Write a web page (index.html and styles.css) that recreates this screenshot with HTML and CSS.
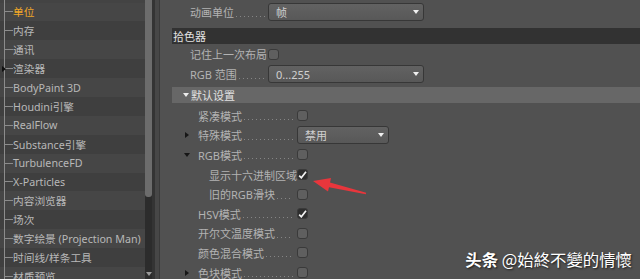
FILE: index.html
```html
<!DOCTYPE html>
<html lang="zh-CN">
<head>
    <meta charset="UTF-8">
    <title>设置 - 单位</title>
    <link rel="stylesheet" href="styles.css">
</head>
<body>

    <div class="app">
        <ul class="tree">
            <li class="node sel"><span class="tick"></span>单位</li>
            <li class="node"><span class="tick"></span>内存</li>
            <li class="node"><span class="tick"></span>通讯</li>
            <li class="node closed"><span class="tick"></span>渲染器</li>
            <li class="node"><span class="tick"></span>BodyPaint 3D</li>
            <li class="node"><span class="tick"></span>Houdini引擎</li>
            <li class="node"><span class="tick"></span>RealFlow</li>
            <li class="node"><span class="tick"></span>Substance引擎</li>
            <li class="node"><span class="tick"></span>TurbulenceFD</li>
            <li class="node"><span class="tick"></span>X-Particles</li>
            <li class="node"><span class="tick"></span>内容浏览器</li>
            <li class="node"><span class="tick"></span>场次</li>
            <li class="node"><span class="tick"></span>数字绘景 (Projection Man)</li>
            <li class="node"><span class="tick"></span>时间线/样条工具</li>
            <li class="node"><span class="tick"></span>材质预览</li>
        </ul>

        <div class="scroll">
            <div class="thumb"></div>
            <div class="track"><span class="down"></span></div>
        </div>
        <div class="split"></div>

        <div class="prefs">
            <div class="row">
                <span class="lab"><span>动画单位</span><span class="dots"></span></span>
                <div class="select wide">帧</div>
            </div>

            <div class="head dark">拾色器</div>
            <div class="row">
                <span class="lab"><span>记住上一次布局</span><span class="dots"></span></span>
                <span class="check"></span>
            </div>
            <div class="row">
                <span class="lab"><span>RGB 范围</span><span class="dots"></span></span>
                <div class="select wide">0...255</div>
            </div>

            <div class="head light"><span class="caret"></span>默认设置</div>
            <div class="group">
                <div class="row">
                    <span class="lab"><span class="tg"></span><span>紧凑模式</span><span class="dots"></span></span>
                    <span class="check"></span>
                </div>
                <div class="row">
                    <span class="lab"><span class="tg right"></span><span>特殊模式</span><span class="dots"></span></span>
                    <div class="select small">禁用</div>
                </div>
                <div class="row">
                    <span class="lab"><span class="tg open"></span><span>RGB模式</span><span class="dots"></span></span>
                    <span class="check"></span>
                </div>
                <div class="row sub">
                    <span class="lab"><span class="tg"></span><span>显示十六进制区域</span><span class="dots"></span></span>
                    <span class="check on"><svg width="9" height="8" viewBox="0 0 9 8"><path d="M1.2 4.6 L3.3 6.8 L8 0.8" fill="none" stroke="#f2f2f2" stroke-width="1.7"/></svg></span>
                </div>
                <div class="row sub">
                    <span class="lab"><span class="tg"></span><span>旧的RGB滑块</span><span class="dots"></span></span>
                    <span class="check"></span>
                </div>
                <div class="row">
                    <span class="lab"><span class="tg"></span><span>HSV模式</span><span class="dots"></span></span>
                    <span class="check on"><svg width="9" height="8" viewBox="0 0 9 8"><path d="M1.2 4.6 L3.3 6.8 L8 0.8" fill="none" stroke="#f2f2f2" stroke-width="1.7"/></svg></span>
                </div>
                <div class="row">
                    <span class="lab"><span class="tg"></span><span>开尔文温度模式</span><span class="dots"></span></span>
                    <span class="check"></span>
                </div>
                <div class="row">
                    <span class="lab"><span class="tg"></span><span>颜色混合模式</span><span class="dots"></span></span>
                    <span class="check"></span>
                </div>
                <div class="row">
                    <span class="lab"><span class="tg right"></span><span>色块模式</span><span class="dots"></span></span>
                    <span class="check"></span>
                </div>
            </div>
        </div>
    </div>

    <!-- annotation drawn over the screenshot -->
    <svg class="arrow" width="640" height="279" viewBox="0 0 640 279">
        <polygon points="313,181 331,178 330,182.4 366.2,192.7 365.8,194.3 329,187.2 328,191.6" fill="#e8363c"/>
    </svg>
    <div class="mark"><b>头条</b> @始終不變的情懷</div>

</body>
</html>
```

FILE: styles.css
```css
* {
    margin: 0;
    padding: 0;
    box-sizing: border-box;
}

body {
    font-family: "Noto Sans", "Noto Sans CJK SC", sans-serif;
    font-size: 11px;
    background-color: #3b3b3b;
    width: 640px;
    height: 279px;
    overflow: hidden;
    position: relative;
}

.app {
    display: flex;
    height: 279px;
}

/* left tree */
.tree {
    list-style: none;
    width: 145px;
    padding-top: 2.5px;
    font-size: 10.7px;
    background: #434343 linear-gradient(#8c8c8c, #8c8c8c) no-repeat 4px 0 / 1px 3px;
    overflow: hidden;
}

.node {
    display: flex;
    align-items: center;
    height: 18.9px;
    padding-left: 4px;
    color: #b8b8b8;
    white-space: nowrap;
}

.node:nth-child(odd) {
    background-color: #464646;
}

.node:nth-child(even) {
    background-color: #3f3f3f;
}

.node.sel {
    color: #f0a628;
}

.tick {
    align-self: stretch;
    width: 9px;
    border-left: 1px solid #8c8c8c;
    background: linear-gradient(#8c8c8c, #8c8c8c) no-repeat 0 50% / 8px 1px;
    position: relative;
}

.closed .tick::before {
    content: "";
    position: absolute;
    left: -3px;
    top: 50%;
    margin-top: -3px;
    border-top: 3px solid transparent;
    border-bottom: 3px solid transparent;
    border-left: 4px solid #111;
}

/* scrollbar */
.scroll {
    width: 7px;
    display: flex;
    flex-direction: column;
    background-color: #2c2c2c;
}

.thumb {
    height: 197px;
    background-color: #6c6c6c;
    border-radius: 0 0 3px 3px;
}

.track {
    flex: 1;
    display: flex;
    align-items: flex-end;
    justify-content: center;
    padding-bottom: 3px;
}

.down {
    border-left: 3px solid transparent;
    border-right: 3px solid transparent;
    border-top: 4px solid #9a9a9a;
}

.split {
    width: 8px;
    background-color: #474747;
    border-left: 3px solid #343434;
    border-right: 1px solid #3a3a3a;
}

/* preferences */
.prefs {
    flex: 1;
    background-color: #515151;
    padding: 2px 0 0 12px;
}

.row {
    display: flex;
    align-items: center;
    height: 20px;
    color: #b3b3b3;
    white-space: nowrap;
}

.lab {
    display: flex;
    align-items: center;
    width: 96px;
    height: 100%;
    padding-left: 18px;
    padding-right: 3px;
}

.dots {
    flex: 1;
    height: 9px;
    margin-left: 2px;
    background-image: linear-gradient(to right, #858585 1px, transparent 1px);
    background-size: 4px 1px;
    background-repeat: repeat-x;
    background-position: 0 100%;
}

.select {
    height: 18px;
    display: flex;
    align-items: center;
    justify-content: space-between;
    padding: 0 4px 0 7px;
    color: #d0d0d0;
    border: 1px solid #373737;
    border-radius: 3px;
    background: linear-gradient(#626262, #585858);
}

.select::after {
    content: "";
    border-left: 3.5px solid transparent;
    border-right: 3.5px solid transparent;
    border-top: 4px solid #f0f0f0;
}

.select.wide {
    width: 156px;
}

.select.small {
    width: 92px;
}

.check {
    width: 11px;
    height: 11px;
    border: 1px solid #3a3a3a;
    border-radius: 3px;
    background-color: #5f5f5f;
}

.check.on {
    display: flex;
    align-items: center;
    justify-content: center;
    background-color: #2e2e2e;
}

.head {
    height: 16px;
    display: flex;
    align-items: center;
    padding-left: 1px;
    color: #e2e2e2;
}

.head.dark {
    background-color: #323232;
    margin-top: 6px;
}

.head.light {
    background-color: #676767;
    margin-top: 3px;
    margin-bottom: 3px;
    padding-left: 11px;
}

.caret {
    border-left: 3px solid transparent;
    border-right: 3px solid transparent;
    border-top: 4px solid #ececec;
    margin-right: 2px;
}

.group .row {
    height: 19.6px;
}

.group .lab {
    width: 125px;
    padding-left: 0;
    padding-right: 4px;
}

.tg {
    width: 26px;
    flex-shrink: 0;
    display: flex;
    align-items: center;
}

.sub .tg {
    width: 37px;
}

.tg.right::before {
    content: "";
    margin-left: 13px;
    border-top: 3px solid transparent;
    border-bottom: 3px solid transparent;
    border-left: 4px solid #161616;
}

.tg.open::before {
    content: "";
    margin-left: 12px;
    border-left: 3px solid transparent;
    border-right: 3px solid transparent;
    border-top: 4px solid #161616;
}

/* overlay */
.arrow {
    position: absolute;
    left: 0;
    top: 0;
    pointer-events: none;
}

.mark {
    position: absolute;
    right: 8px;
    bottom: 8px;
    font-family: "Noto Sans CJK SC", sans-serif;
    font-size: 16.4px;
    color: #fff;
    text-shadow: 1px 1px 2px rgba(0, 0, 0, 0.7);
    white-space: nowrap;
}
```
